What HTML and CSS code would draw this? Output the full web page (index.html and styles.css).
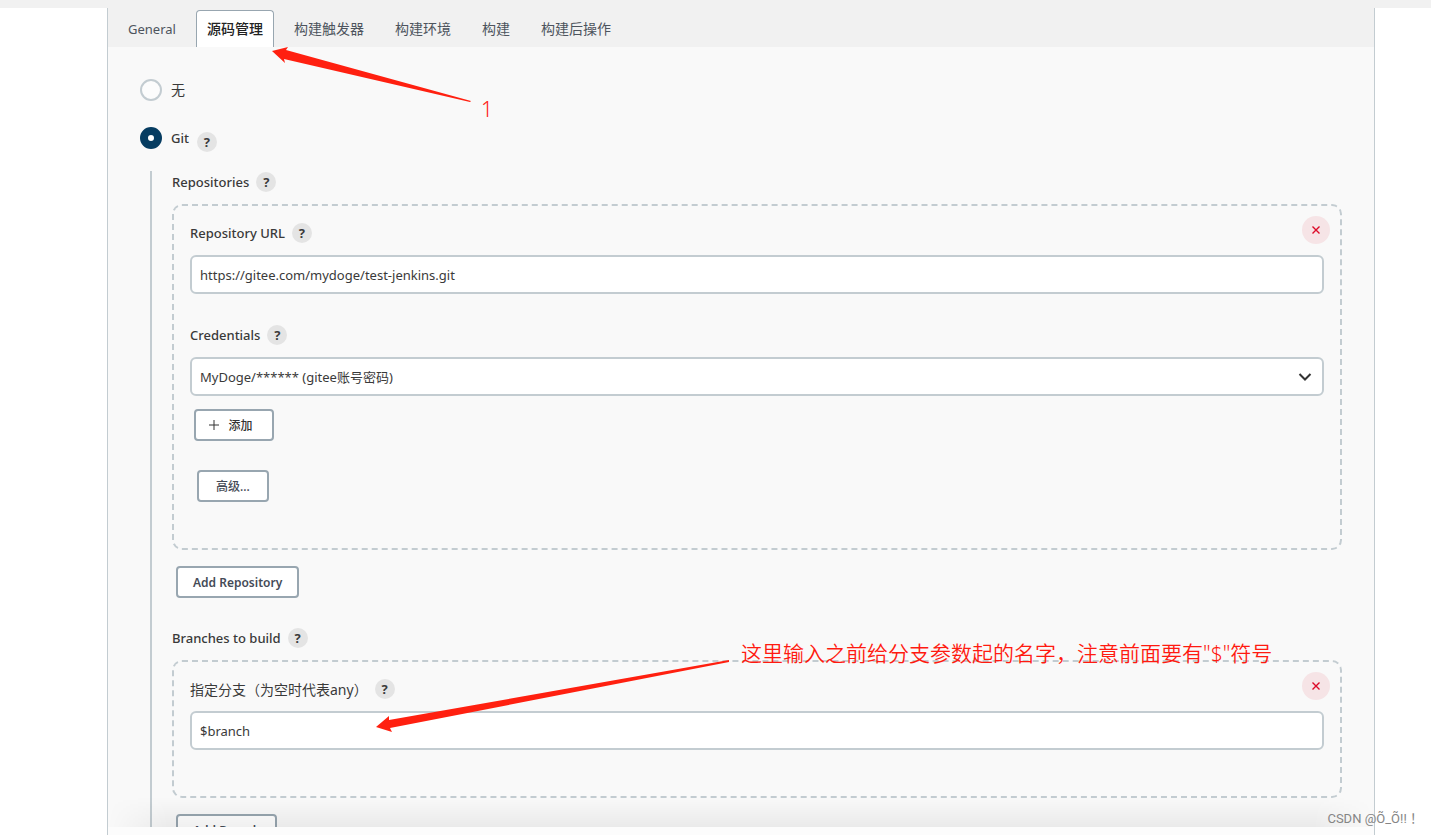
FILE: index.html
```html
<!DOCTYPE html>
<html lang="zh-CN">
<head>
<meta charset="utf-8">
<title>源码管理</title>
<link rel="stylesheet" href="styles.css">
</head>
<body>
<div class="page">
  <div class="top-strip"></div>
  <div class="panel">
    <nav class="tabs">
      <a class="tab" href="#general">General</a>
      <a class="tab tab-active" href="#scm">源码管理</a>
      <a class="tab" href="#triggers">构建触发器</a>
      <a class="tab" href="#env">构建环境</a>
      <a class="tab" href="#build">构建</a>
      <a class="tab" href="#post">构建后操作</a>
    </nav>
    <form class="config">
      <div class="choice">
        <input class="radio" type="radio" name="scm" id="scm-none">
        <label class="choice-name" for="scm-none">无</label>
      </div>
      <div class="choice">
        <input class="radio" type="radio" name="scm" id="scm-git" checked>
        <label class="choice-name" for="scm-git">Git</label>
        <button class="help" type="button">?</button>
      </div>
      <div class="nested">
        <div class="label-row"><span>Repositories</span><button class="help" type="button">?</button></div>
        <section class="chunk">
          <button class="remove" type="button" aria-label="Delete">
            <svg width="10" height="10" viewBox="0 0 10 10"><path d="M1.5 1.5l7 7M8.5 1.5l-7 7"/></svg>
          </button>
          <div class="label-row"><label for="url">Repository URL</label><button class="help" type="button">?</button></div>
          <input class="field" id="url" type="text" value="https://gitee.com/mydoge/test-jenkins.git">
          <div class="label-row label-next"><label for="cred">Credentials</label><button class="help" type="button">?</button></div>
          <div class="select-wrap">
            <select class="field" id="cred"><option>MyDoge/****** (gitee账号密码)</option></select>
            <svg class="chevron" width="14" height="10" viewBox="0 0 14 10"><path d="M1.5 2l5.5 5.5L12.5 2"/></svg>
          </div>
          <button class="btn btn-add" type="button">
            <svg width="10" height="10" viewBox="0 0 10 10"><path d="M5 0v10M0 5h10"/></svg>
            <span>添加</span>
          </button>
          <button class="btn btn-advanced" type="button">高级...</button>
        </section>
        <button class="btn btn-repeat" type="button">Add Repository</button>
        <div class="label-row label-branches"><span>Branches to build</span><button class="help" type="button">?</button></div>
        <section class="chunk">
          <button class="remove" type="button" aria-label="Delete">
            <svg width="10" height="10" viewBox="0 0 10 10"><path d="M1.5 1.5l7 7M8.5 1.5l-7 7"/></svg>
          </button>
          <div class="label-row label-cjk"><label for="branch">指定分支（为空时代表any）</label><button class="help" type="button">?</button></div>
          <input class="field" id="branch" type="text" value="$branch">
        </section>
        <button class="btn btn-repeat" type="button">Add Branch</button>
      </div>
      <div class="fade"></div>
    </form>
    <div class="bottom-bar"></div>
  </div>
  <svg class="arrows" width="760" height="740" viewBox="0 0 760 740">
    <path d="M272 51L288 47L286 50L471 101L470 102L284 59L285 63Z"/>
    <path d="M376 727L389 716L389 720L729 660L729 662L390 728L392 732Z"/>
  </svg>
  <span class="note note-one">1</span>
  <span class="note note-branch">这里输入之前给分支参数起的名字，注意前面要有"$"符号</span>
  <span class="watermark">CSDN @Õ_Õ!! ！</span>
</div>
</body>
</html>
```
FILE: styles.css
```css
* { box-sizing: border-box; }

body {
  margin: 0;
  background: #fff;
  color: #3a3a3a;
  font-family: "Noto Sans", "Noto Sans CJK SC", sans-serif;
  font-size: 13px;
}

button, input, select { font: inherit; color: inherit; }

.page {
  position: relative;
  display: flex;
  flex-direction: column;
  height: 100vh;
  overflow: hidden;
}

.top-strip { flex: none; height: 8px; background: #f1f1f1; }

.panel {
  flex: 1;
  min-height: 0;
  display: flex;
  flex-direction: column;
  margin: 0 56px 0 107px;
  border: solid #c3ccd1;
  border-width: 0 1px;
  background: #f9f9f9;
}

.tabs {
  flex: none;
  display: flex;
  gap: 9px;
  padding: 2px 9px 0;
  background: #f1f1f1;
}

.tab {
  height: 37px;
  padding: 0 10px;
  border: 1px solid transparent;
  border-bottom: 0;
  border-radius: 4px 4px 0 0;
  color: #4d545d;
  font-size: 14px;
  line-height: 36px;
  text-decoration: none;
}
.tab:first-child { font-size: 13px; }

.tab-active {
  border-color: #98a6b0;
  background: #fff;
  color: #222;
  font-weight: 500;
}

.config {
  position: relative;
  flex: 1;
  min-height: 0;
  overflow: hidden;
  padding: 32px 32px 0;
}

.choice {
  display: flex;
  align-items: flex-start;
  margin-bottom: 26px;
}
.choice:nth-child(2) { margin-bottom: 19px; font-weight: 500; }
.choice .help { margin: 5px 0 0 8px; }
.choice-name { margin-left: 9px; line-height: 22px; }
.choice:first-child .choice-name { font-size: 14px; }

.radio {
  appearance: none;
  width: 22px;
  height: 22px;
  margin: 0;
  border: 2px solid #c3ccd1;
  border-radius: 50%;
  background: #fcfcfc;
}
.radio:checked { border: 8px solid #063c61; background: #fff; }

.nested {
  margin-left: 10px;
  padding-left: 20px;
  border-left: 2px solid #c3ccd1;
}

.label-row {
  display: flex;
  align-items: center;
  gap: 7px;
  height: 22px;
  margin-bottom: 11px;
  font-weight: 500;
}
.label-next { margin-top: 30px; }
.label-branches { margin-top: 29px; }
.label-cjk { font-size: 14px; font-weight: 400; }

.help {
  width: 20px;
  height: 20px;
  padding: 0;
  border: 0;
  border-radius: 50%;
  background: #e4e4e4;
  font-size: 13px;
  font-weight: 700;
  line-height: 20px;
}

.chunk {
  position: relative;
  margin-bottom: 16px;
  padding: 16px 16px 46px;
  border: 2px dashed #c3ccd1;
  border-radius: 10px;
}

.remove {
  position: absolute;
  top: 10px;
  right: 10px;
  display: flex;
  align-items: center;
  justify-content: center;
  width: 28px;
  height: 28px;
  padding: 0;
  border: 0;
  border-radius: 50%;
  background: #f6e4e6;
}
.remove path { stroke: #dc0a28; stroke-width: 1.4; }

.field {
  display: block;
  appearance: none;
  width: 100%;
  height: 39px;
  padding: 0 8px;
  border: 2px solid #c3ccd1;
  border-radius: 6px;
  background: #fff;
}

.select-wrap { position: relative; }
.chevron { position: absolute; right: 12px; top: 15px; }
.chevron path { fill: none; stroke: #333; stroke-width: 2; }

.btn {
  display: flex;
  align-items: center;
  justify-content: center;
  height: 32px;
  padding: 0 15px;
  border: 2px solid #98a6b0;
  border-radius: 4px;
  background: #fff;
  color: #454b57;
  font-size: 12px;
  font-weight: 600;
  white-space: nowrap;
}
.btn-add {
  gap: 9px;
  width: 80px;
  margin: 13px 0 0 4px;
  padding: 0 18px 0 12px;
  color: #333;
  font-weight: 500;
}
.btn-add path { stroke: #333; }
.btn-advanced { width: 72px; margin: 29px 0 0 7px; font-weight: 500; }
.btn-repeat { margin-left: 4px; }

.fade {
  position: absolute;
  left: 0;
  right: 0;
  bottom: 0;
  height: 30px;
  background: linear-gradient(to bottom, rgba(0, 0, 0, 0), rgba(0, 0, 0, 0.06));
  mask-image: linear-gradient(to right, transparent, #000 60px, #000 calc(100% - 60px), transparent);
}

.bottom-bar { flex: none; height: 8px; background: #fcfcfc; }

.arrows { position: absolute; left: 0; top: 0; pointer-events: none; fill: #ff2010; }

.note {
  position: absolute;
  color: #ff1a10;
  font-size: 21px;
  line-height: 30px;
  font-weight: 350;
  white-space: nowrap;
}
.note-one { left: 481px; top: 94px; }
.note-branch { left: 741px; top: 638px; }

.watermark {
  position: absolute;
  right: 8px;
  bottom: 6px;
  color: #858585;
  font-family: Roboto, "Noto Sans CJK SC", sans-serif;
  font-size: 13px;
  line-height: 20px;
}
```
